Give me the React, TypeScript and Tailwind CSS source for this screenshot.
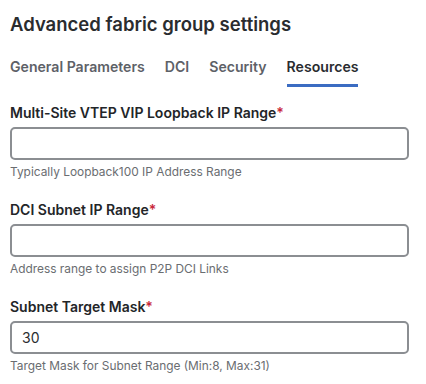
import React from "react";

type FieldProps = {
  label: string;
  help: string;
  value?: string;
};

function Field({ label, help, value = "" }: FieldProps) {
  return (
    <div className="flex flex-col">
      <label className="text-[14px] font-semibold leading-5 text-[#232528]">
        {label}
        <span className="text-[#c8283a]">*</span>
      </label>
      <input
        readOnly
        value={value}
        className="mt-[4px] h-[33px] w-[399px] rounded-[5px] border-2 border-[#8b8e92] bg-white px-[10px] text-[14px] text-[#2b2d30] outline-none"
      />
      <p className="mt-[4px] text-[11.9px] leading-4 text-[#6a6d71]">{help}</p>
    </div>
  );
}

export default function App() {
  const tabs = ["General Parameters", "DCI", "Security", "Resources"];
  const active = "Resources";

  return (
    <div className="h-[384px] w-[426px] overflow-hidden bg-white pl-[10px] pt-[12px] font-['Inter',sans-serif]">
      <h1 className="text-[18.5px] font-semibold leading-6 text-[#2a2c2f]">Advanced fabric group settings</h1>

      <div className="mt-[21px] flex gap-5">
        {tabs.map((tab) => (
          <div key={tab} className="flex flex-col">
            <span
              className={`text-[14.1px] font-semibold leading-5 ${
                tab === active ? "text-[#2a2c30]" : "text-[#5d6167]"
              }`}
            >
              {tab}
            </span>
            <span className={`mt-[7px] h-[3px] w-full ${tab === active ? "bg-[#3b6cc2]" : "bg-transparent"}`} />
          </div>
        ))}
      </div>

      <div className="mt-[16px] flex flex-col gap-[20px]">
        <Field label="Multi-Site VTEP VIP Loopback IP Range" help="Typically Loopback100 IP Address Range" />
        <Field label="DCI Subnet IP Range" help="Address range to assign P2P DCI Links" />
        <Field label="Subnet Target Mask" help="Target Mask for Subnet Range (Min:8, Max:31)" value="30" />
      </div>
    </div>
  );
}
